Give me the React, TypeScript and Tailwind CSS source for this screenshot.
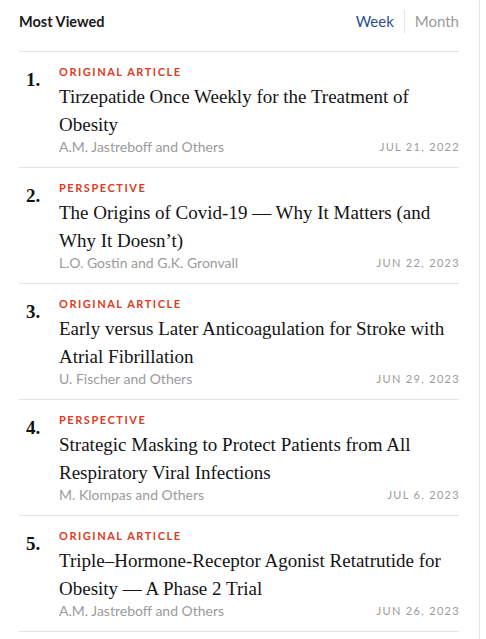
import React from "react";

type Item = {
  type: string;
  title: string;
  authors: string;
  date: string;
};

const items: Item[] = [
  {
    type: "Original Article",
    title: "Tirzepatide Once Weekly for the Treatment of Obesity",
    authors: "A.M. Jastreboff and Others",
    date: "Jul 21, 2022",
  },
  {
    type: "Perspective",
    title: "The Origins of Covid-19 — Why It Matters (and Why It Doesn’t)",
    authors: "L.O. Gostin and G.K. Gronvall",
    date: "Jun 22, 2023",
  },
  {
    type: "Original Article",
    title: "Early versus Later Anticoagulation for Stroke with Atrial Fibrillation",
    authors: "U. Fischer and Others",
    date: "Jun 29, 2023",
  },
  {
    type: "Perspective",
    title: "Strategic Masking to Protect Patients from All Respiratory Viral Infections",
    authors: "M. Klompas and Others",
    date: "Jul 6, 2023",
  },
  {
    type: "Original Article",
    title: "Triple–Hormone-Receptor Agonist Retatrutide for Obesity — A Phase 2 Trial",
    authors: "A.M. Jastreboff and Others",
    date: "Jun 26, 2023",
  },
];

const sans = "font-['Lato','Open_Sans',sans-serif]";
const serif = "font-['Liberation_Serif','Times_New_Roman',serif]";

export default function App() {
  return (
    <div className="min-h-screen bg-white">
      <div className="w-[480px] min-h-[639px] border-r border-[#e2e2e2] pl-[19px] pr-[20px]">
        {/* Header */}
        <div className="flex items-center justify-between h-[52px] border-b border-[#e4e4e4]">
          <h2 className={`${sans} text-[14.5px] font-bold text-[#1a1a1a] -mt-[8px]`}>
            Most Viewed
          </h2>
          <div className={`${sans} flex items-center text-[15px] -mt-[8px]`}>
            <button className="pr-[10px] text-[#2c4f8c]">Week</button>
            <span className="w-px h-[24px] bg-[#e4e4e4]" />
            <button className="pl-[10px] text-[#9a9a9a]">Month</button>
          </div>
        </div>

        {/* List */}
        <ol>
          {items.map((item, i) => (
            <li key={i} className="flex border-b border-[#e4e4e4] pt-[12px] pb-[12px]">
              <div className={`${serif} w-[40px] pl-[7px] mt-[4px] text-[19px] font-bold leading-[24px] text-[#111]`}>
                {i + 1}.
              </div>
              <div className="flex-1">
                <div className={`${sans} text-[11px] font-bold uppercase tracking-[0.14em] leading-[16px] text-[#db3b24]`}>
                  {item.type}
                </div>
                <div className={`${serif} mt-[3px] text-[19px] leading-[28px] text-[#141414]`}>
                  {item.title}
                </div>
                <div className="flex items-center justify-between leading-[16px]">
                  <span className={`${sans} text-[14px] text-[#9b9b9b]`}>{item.authors}</span>
                  <span className={`${sans} text-[11px] uppercase tracking-[0.12em] text-[#9b9b9b] -mr-[1px]`}>
                    {item.date}
                  </span>
                </div>
              </div>
            </li>
          ))}
        </ol>
      </div>
    </div>
  );
}
